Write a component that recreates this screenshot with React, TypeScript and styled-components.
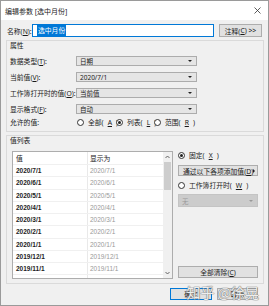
import React from 'react'
import styled, { createGlobalStyle } from 'styled-components'

const GlobalStyle = createGlobalStyle`
  html, body { margin: 0; padding: 0; background: #f0f0f0; }
  body { font-family: "Noto Sans", "Noto Sans CJK SC", sans-serif; color: #1a1a1a; }
  * { box-sizing: border-box; }
`

const Window = styled.div`
  position: relative;
  width: 269px;
  height: 306px;
  border: 1px solid #9a9a9a;
  background: #f0f0f0;
  display: flex;
  flex-direction: column;
  overflow: hidden;
  white-space: nowrap;
`

const TitleBar = styled.div`
  height: 19px;
  background: #fff;
  display: flex;
  align-items: center;
  justify-content: space-between;
  padding: 0 7px 0 4px;
  font-size: 7px;
  color: #222;
`

const Body = styled.div`
  flex: 1;
  display: flex;
  flex-direction: column;
  padding: 4px 4px 0 5px;
  font-size: 6.8px;
`

const NameRow = styled.div`
  display: flex;
  align-items: center;
  height: 13px;
`

const NameLabel = styled.span`
  width: 26px;
  padding-left: 1px;
  flex-shrink: 0;
`

const NameInput = styled.div`
  width: 182px;
  height: 13px;
  background: #fff;
  border: 1px solid #0078d7;
  display: flex;
  align-items: center;
  padding-left: 4px;
  margin-right: 5px;
`

const Selected = styled.span`
  background: #0078d7;
  color: #fff;
  line-height: 11px;
  padding: 0 1px;
`

const Button = styled.div<{ $w?: number; $primary?: boolean; $h?: number }>`
  width: ${p => (p.$w ? `${p.$w}px` : '100%')};
  height: ${p => p.$h ?? 12}px;
  background: #e1e1e1;
  border: 1px solid ${p => (p.$primary ? '#0078d7' : '#adadad')};
  display: flex;
  align-items: center;
  justify-content: center;
  font-size: 6.8px;
  color: #1a1a1a;
  flex-shrink: 0;
`

const Group = styled.div<{ $top: number }>`
  margin-top: ${p => p.$top}px;
  border: 1px solid #dadada;
  padding: 0 5px 4px 3px;
  display: flex;
  flex-direction: column;
`

const GroupLabel = styled.div<{ $gap: number }>`
  line-height: 7px;
  height: 7px;
  margin-top: 1px;
  margin-bottom: ${p => p.$gap}px;
`

const FieldRow = styled.div<{ $h?: number }>`
  display: flex;
  align-items: center;
  height: ${p => p.$h ?? 16}px;
`

const FieldLabel = styled.span`
  width: 66px;
  flex-shrink: 0;
`

const Select = styled.div<{ $w?: number; $h?: number; $disabled?: boolean }>`
  width: ${p => (p.$w ? `${p.$w}px` : '100%')};
  height: ${p => p.$h ?? 10}px;
  background: ${p => (p.$disabled ? '#cccccc' : '#e5e5e5')};
  border: 1px solid ${p => (p.$disabled ? '#c4c4c4' : '#acacac')};
  display: flex;
  align-items: center;
  justify-content: space-between;
  padding: 0 4px 0 3px;
  font-size: 6.5px;
  color: ${p => (p.$disabled ? '#9a9a9a' : '#1a1a1a')};
`

const Caret = styled.span<{ $color?: string }>`
  width: 0;
  height: 0;
  border-left: 2px solid transparent;
  border-right: 2px solid transparent;
  border-top: 2.5px solid ${p => p.$color ?? '#222'};
`

const RightCaret = styled.span`
  width: 0;
  height: 0;
  border-top: 2px solid transparent;
  border-bottom: 2px solid transparent;
  border-left: 2.5px solid #222;
`

const RadioGroup = styled.div`
  display: flex;
  align-items: center;
  margin-left: 1px;
`

const RadioItem = styled.label<{ $w?: number }>`
  display: flex;
  align-items: center;
  gap: 4px;
  width: ${p => (p.$w ? `${p.$w}px` : 'auto')};
`

const Dot = styled.span<{ $on?: boolean }>`
  width: 7px;
  height: 7px;
  border-radius: 50%;
  border: 1px solid #333;
  background: #fff;
  display: flex;
  align-items: center;
  justify-content: center;
  flex-shrink: 0;
  &::after {
    content: '';
    width: 3px;
    height: 3px;
    border-radius: 50%;
    background: ${p => (p.$on ? '#222' : 'transparent')};
  }
`

const ListArea = styled.div`
  display: flex;
  height: 128px;
  margin-left: 2px;
  gap: 5px;
`

const List = styled.div`
  width: 161px;
  height: 100%;
  background: #fff;
  border: 1px solid #adadad;
  display: flex;
`

const Table = styled.div`
  flex: 1;
  display: grid;
  grid-template-columns: 74px 1fr;
  grid-auto-rows: 12.25px;
  grid-template-rows: 13px;
  align-content: start;
  background: linear-gradient(#e9e9e9, #e9e9e9) 74px 0 / 1px 100% no-repeat;
`

const Cell = styled.div<{ $muted?: boolean; $head?: boolean }>`
  display: flex;
  align-items: center;
  padding-left: 3px;
  font-family: ${p => (p.$head ? '"Noto Sans", "Noto Sans CJK SC", sans-serif' : '"Liberation Sans", Arial, sans-serif')};
  font-size: ${p => (p.$head ? 6.8 : 6.5)}px;
  font-weight: ${p => (p.$muted || p.$head ? 400 : 700)};
  color: ${p => (p.$muted ? '#999' : '#222')};
  border-bottom: 1px solid #f0f0f0;
`

const Scrollbar = styled.div`
  width: 9px;
  background: #f0f0f0;
  display: flex;
  flex-direction: column;
  align-items: center;
`

const ScrollArrow = styled.div`
  height: 10px;
  display: flex;
  align-items: center;
  justify-content: center;
`

const Thumb = styled.div`
  width: 7px;
  height: 28px;
  background: #cdcdcd;
`

const Fill = styled.div`
  flex: 1;
`

const SidePanel = styled.div`
  width: 80px;
  display: flex;
  flex-direction: column;
  padding-bottom: 1px;
`

const Spacer = styled.div<{ $h: number }>`
  height: ${p => p.$h}px;
  flex-shrink: 0;
`

const AddButton = styled(Button)`
  justify-content: space-between;
  padding: 0 3px 0 4px;
`

const Footer = styled.div`
  display: flex;
  justify-content: flex-end;
  gap: 5px;
  margin-top: 4px;
  padding-right: 6px;
`

const Watermark = styled.div`
  position: absolute;
  right: 9px;
  bottom: 5px;
  font-family: "Noto Sans CJK SC", sans-serif;
  font-size: 14px;
  line-height: 16px;
  color: rgba(255, 255, 255, 0.9);
  text-shadow: 0 0 1px #777, 0 0 1px #777, 0 0 1px #888;
  pointer-events: none;
`

const rows = ['2020/7/1', '2020/6/1', '2020/5/1', '2020/4/1', '2020/3/1', '2020/2/1', '2020/1/1', '2019/12/1', '2019/11/1']

const Chevron = ({ up }: { up?: boolean }) => (
  <svg width="5" height="4" viewBox="0 0 5 4">
    <path d={up ? 'M0.5 3 L2.5 1 L4.5 3' : 'M0.5 1 L2.5 3 L4.5 1'} stroke="#555" strokeWidth="0.9" fill="none" />
  </svg>
)

export default function App() {
  return (
    <>
      <GlobalStyle />
      <Window>
        <TitleBar>
          <span>编辑参数 [选中月份]</span>
          <svg width="7" height="7" viewBox="0 0 7 7">
            <path d="M0.5 0.5 L6.5 6.5 M6.5 0.5 L0.5 6.5" stroke="#333" strokeWidth="0.8" />
          </svg>
        </TitleBar>
        <Body>
          <NameRow>
            <NameLabel>名称(<u>N</u>):</NameLabel>
            <NameInput>
              <Selected>选中月份</Selected>
            </NameInput>
            <Button $w={43} $h={13}>注释(<u>C</u>) &gt;&gt;</Button>
          </NameRow>

          <Group $top={3}>
            <GroupLabel $gap={4}>属性</GroupLabel>
            <FieldRow>
              <FieldLabel>数据类型(<u>T</u>):</FieldLabel>
              <Select $w={121}>日期<Caret /></Select>
            </FieldRow>
            <FieldRow>
              <FieldLabel>当前值(<u>V</u>):</FieldLabel>
              <Select $w={121}>2020/7/1<Caret /></Select>
            </FieldRow>
            <FieldRow>
              <FieldLabel>工作簿打开时的值(<u>O</u>):</FieldLabel>
              <Select $w={121}>当前值<Caret /></Select>
            </FieldRow>
            <FieldRow>
              <FieldLabel>显示格式(<u>F</u>):</FieldLabel>
              <Select $w={121}>自动<Caret /></Select>
            </FieldRow>
            <FieldRow $h={10}>
              <FieldLabel>允许的值:</FieldLabel>
              <RadioGroup>
                <RadioItem $w={39}><Dot />全部(<u>A</u>)</RadioItem>
                <RadioItem $w={38}><Dot $on />列表(<u>L</u>)</RadioItem>
                <RadioItem><Dot />范围(<u>R</u>)</RadioItem>
              </RadioGroup>
            </FieldRow>
          </Group>

          <Group $top={3}>
            <GroupLabel $gap={7}>值列表</GroupLabel>
            <ListArea>
              <List>
                <Table>
                  <Cell $head>值</Cell>
                  <Cell $head>显示为</Cell>
                  {rows.map(r => (
                    <React.Fragment key={r}>
                      <Cell>{r}</Cell>
                      <Cell $muted>{r}</Cell>
                    </React.Fragment>
                  ))}
                </Table>
                <Scrollbar>
                  <ScrollArrow><Chevron up /></ScrollArrow>
                  <Thumb />
                  <Fill />
                  <ScrollArrow><Chevron /></ScrollArrow>
                </Scrollbar>
              </List>
              <SidePanel>
                <FieldRow $h={8}>
                  <RadioItem><Dot $on />固定(<u>X</u>)</RadioItem>
                </FieldRow>
                <Spacer $h={6} />
                <AddButton $h={11}>
                  <span>通过以下各项添加值(<u>D</u>)</span>
                  <RightCaret />
                </AddButton>
                <Spacer $h={5} />
                <FieldRow $h={8}>
                  <RadioItem><Dot />工作簿打开时(<u>W</u>)</RadioItem>
                </FieldRow>
                <Spacer $h={5} />
                <Select $h={13} $disabled>无<Caret $color="#999" /></Select>
                <Fill />
                <Button $h={12}>全部清除(<u>C</u>)</Button>
              </SidePanel>
            </ListArea>
          </Group>

          <Footer>
            <Button $w={42} $primary>确定</Button>
            <Button $w={41}>取消</Button>
          </Footer>
        </Body>
        <Watermark>知乎 @徐晃</Watermark>
      </Window>
    </>
  )
}
